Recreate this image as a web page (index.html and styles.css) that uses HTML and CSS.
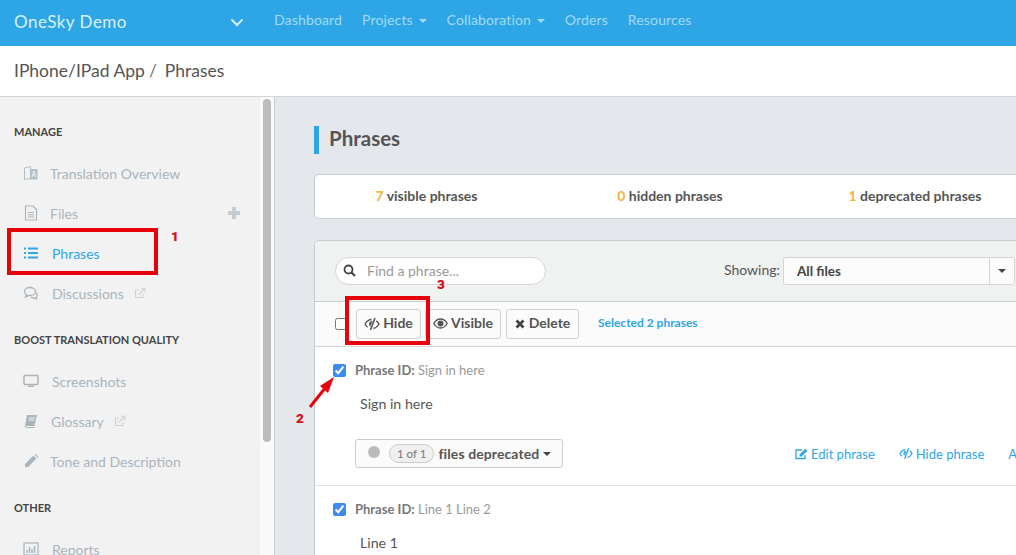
FILE: index.html
```html
<!DOCTYPE html>
<html lang="en">
<head>
<meta charset="utf-8">
<title>Phrases</title>
<link rel="stylesheet" href="styles.css">
</head>
<body>
<header class="topbar">
  <div class="brand"><span>OneSky Demo</span>
    <svg class="chev" width="14" height="9" viewBox="0 0 14 9"><path d="M1.500 1.500 7 7l5.500-5.500" fill="none" stroke="#d8f0fc" stroke-width="2"/></svg>
  </div>
  <nav class="topnav">
    <a>Dashboard</a>
    <a>Projects <i class="caret"></i></a>
    <a>Collaboration <i class="caret"></i></a>
    <a>Orders</a>
    <a>Resources</a>
  </nav>
</header>
<div class="crumbs"><span>IPhone/IPad App</span><span class="sep">/</span><span>Phrases</span></div>
<div class="body">
  <aside class="sidebar">
    <h4>MANAGE</h4>
    <a class="item"><svg class="ic" viewBox="0 0 16 16"><path d="M1.500 3l6-1.500v12l-6 1z" fill="none" stroke="#b4c0c8"/><path d="M7 4h7.500v10.500H7z" fill="#b4c0c8"/><path d="M9 12l1.800-6 1.800 6M9.800 10h2" fill="none" stroke="#f2f2f3"/></svg><span class="t1">Translation Overview</span></a>
    <a class="item"><svg class="ic" viewBox="0 0 16 16"><path d="M2.500 1h7.500l3.500 3.500V15h-11z" fill="none" stroke="#a9b5bd" stroke-width="1.200"/><path d="M5 7.500h6M5 9.800h6M5 12h6" stroke="#a9b5bd" stroke-width="1"/></svg><span class="t1">Files</span><span class="plus"></span></a>
    <a class="item active"><svg class="ic" viewBox="0 0 16 16"><path d="M5 3.500h10M5 8h10M5 12.500h10" stroke="#2ea6e6" stroke-width="2"/><path d="M1 2.500h2v2H1zM1 7h2v2H1zM1 11.500h2v2H1z" fill="#2ea6e6"/></svg><span class="t2">Phrases</span></a>
    <a class="item"><svg class="ic" viewBox="0 0 16 16"><ellipse cx="7" cy="6.500" rx="5.500" ry="4" fill="none" stroke="#a9b5bd" stroke-width="1.300"/><path d="M3.500 10l-1 2 3-1M13 8c2 1.500 1 4 0 4.500l.5 1.500-3-1c-1 0-2-.5-2.500-1" fill="none" stroke="#a9b5bd" stroke-width="1.300"/></svg><span class="t2">Discussions</span><svg class="ext" viewBox="0 0 12 12"><path d="M9 7v3.500H1.500V3H5" fill="none" stroke="#ccd3d8" stroke-width="1.100"/><path d="M4.500 7.500 10 2M7 1.200h4v4" fill="none" stroke="#ccd3d8" stroke-width="1.100"/></svg></a>
    <h4>BOOST TRANSLATION QUALITY</h4>
    <a class="item"><svg class="ic" viewBox="0 0 16 16"><rect x="1" y="2.500" width="14" height="9" rx="1" fill="none" stroke="#a9b5bd" stroke-width="1.500"/><path d="M5 14h6v-1.500H5z" fill="#a9b5bd"/></svg><span class="t3">Screenshots</span></a>
    <a class="item"><svg class="ic" viewBox="0 0 16 16"><path d="M4 2h10l-2.500 11H2z" fill="#a9b5bd"/><path d="M2 13c0 1 .5 1.500 1.500 1.500h8" fill="none" stroke="#a9b5bd"/><path d="M6 5h6M5.500 7h6" stroke="#f2f2f3"/></svg><span class="t4">Glossary</span><svg class="ext" viewBox="0 0 12 12"><path d="M9 7v3.500H1.500V3H5" fill="none" stroke="#ccd3d8" stroke-width="1.100"/><path d="M4.500 7.500 10 2M7 1.200h4v4" fill="none" stroke="#ccd3d8" stroke-width="1.100"/></svg></a>
    <a class="item"><svg class="ic" viewBox="0 0 16 16"><path d="M2 11 10.500 2.500l3 3L5 14H2zM11.500 1.500l1-.5 3 3-.5 1z" fill="#a9b5bd"/></svg><span class="t1">Tone and Description</span></a>
    <h4>OTHER</h4>
    <a class="item"><svg class="ic" viewBox="0 0 16 16"><rect x="1" y="2" width="14" height="12" fill="none" stroke="#a9b5bd" stroke-width="1.200"/><path d="M4 12V9M6.500 12V6M9 12V8M11.500 12V5" stroke="#a9b5bd" stroke-width="1.500"/></svg><span class="t3">Reports</span></a>
  </aside>
  <div class="track"><div class="thumb"></div></div>
  <main class="main">
    <h1 class="title">Phrases</h1>
    <section class="stats">
      <div><b>7</b> visible phrases</div>
      <div><b>0</b> hidden phrases</div>
      <div><b>1</b> deprecated phrases</div>
    </section>
    <section class="panel">
      <div class="filters">
        <div class="search"><svg width="13" height="13" viewBox="0 0 13 13"><circle cx="5.500" cy="5.500" r="4" fill="none" stroke="#444" stroke-width="1.800"/><path d="m8.500 8.500 3.500 3.500" stroke="#444" stroke-width="2.200"/></svg><span>Find a phrase...</span></div>
        <span class="showing">Showing:</span>
        <div class="select"><span class="val">All files</span><span class="drop"><i class="caret dark"></i></span></div>
      </div>
      <div class="toolbar">
        <input type="checkbox" class="cb">
        <button class="btn b-hide"><svg width="16" height="12" viewBox="0 0 16 12"><path d="M1 6c2-3 4-4.500 6.500-4.500M9.500 10.500C12 10 13.500 8.500 15 6c-.8-1.300-1.700-2.300-2.700-3.100M3.500 9.200C2.500 8.500 1.700 7.300 1 6" fill="none" stroke="#555" stroke-width="1.400"/><path d="M5 6a3 3 0 0 1 3.500-3L6.300 8.500A3 3 0 0 1 5 6z" fill="#555"/><path d="M11 0 6.500 12" stroke="#555" stroke-width="1.600"/></svg>Hide</button>
        <button class="btn b-visible"><svg width="15" height="11" viewBox="0 0 15 11"><path d="M.8 5.500C2.500 2.500 5 1 7.500 1s5 1.500 6.700 4.500C12.500 8.500 10 10 7.500 10S2.500 8.500.8 5.500z" fill="none" stroke="#555" stroke-width="1.300"/><circle cx="7.500" cy="5.500" r="3" fill="#555"/></svg>Visible</button>
        <button class="btn b-delete"><svg width="10" height="10" viewBox="0 0 10 10"><path d="M1.500 1.500l7 7M8.500 1.500l-7 7" stroke="#444" stroke-width="2.800"/></svg>Delete</button>
        <span class="selected">Selected 2 phrases</span>
      </div>
      <article class="row">
        <div class="pid"><input type="checkbox" class="cb2" checked><span><b>Phrase ID:</b> Sign in here</span></div>
        <p class="phrase">Sign in here</p>
        <div class="actions">
          <div class="dep"><i class="dot"></i><span class="pill">1 of 1</span><span class="deptext">files deprecated</span><i class="caret dark"></i></div>
          <div class="links">
            <a><svg width="13" height="12" viewBox="0 0 13 12"><path d="M10 7v3.500H1V2h6" fill="none" stroke="#2ea6e6" stroke-width="1.300"/><path d="M4.500 8.500V6.500L10.500 .8l2 2-6 5.700z" fill="#2ea6e6"/></svg>Edit phrase</a>
            <a><svg width="14" height="11" viewBox="0 0 16 12"><path d="M1 6c2-3 4-4.500 6.500-4.500M9.500 10.500C12 10 13.500 8.500 15 6c-.8-1.300-1.700-2.300-2.700-3.100M3.500 9.200C2.500 8.500 1.700 7.300 1 6" fill="none" stroke="#2ea6e6" stroke-width="1.400"/><path d="M5 6a3 3 0 0 1 3.500-3L6.300 8.500A3 3 0 0 1 5 6z" fill="#2ea6e6"/><path d="M11 0 6.500 12" stroke="#2ea6e6" stroke-width="1.600"/></svg>Hide phrase</a>
            <a>Add</a>
          </div>
        </div>
      </article>
      <article class="row">
        <div class="pid"><input type="checkbox" class="cb2" checked><span><b>Phrase ID:</b> Line 1 Line 2</span></div>
        <p class="phrase">Line 1</p>
      </article>
    </section>
  </main>
</div>
<div class="mark m-phrases"></div>
<div class="mark m-hide"></div>
<span class="num n1">1</span>
<span class="num n2">2</span>
<span class="num n3">3</span>
<svg class="arrow" width="30" height="34" viewBox="0 0 30 34"><path d="M2 32 18 12" stroke="#e8000b" stroke-width="3"/><path d="M26 2 12 11l8 7z" fill="#e8000b"/></svg>
</body>
</html>
```
FILE: styles.css
```css
* { box-sizing: border-box; }
html, body { margin: 0; height: 555px; overflow: hidden; }
body { font-family: Lato, "Open Sans", sans-serif; font-size: 14px; color: #555; background: #fff; position: relative; }
a { display: block; }
h1, h4, p { margin: 0; }

.topbar { height: 46px; background: #2ea6e6; display: flex; align-items: center; }
.brand { width: 274px; padding: 0 30px 4px 14px; display: flex; justify-content: space-between; align-items: center; color: #d8f0fc; font-size: 17px; letter-spacing: .5px; flex: none; }
.chev { margin-top: 2px; }
.topnav { display: flex; gap: 20px; color: #a3daf6; font-size: 14px; letter-spacing: .15px; margin-top: -7px; }
.topnav a { white-space: nowrap; }
.caret { display: inline-block; width: 0; height: 0; border: 4px solid transparent; border-top-color: #a3daf6; border-bottom: 0; margin-left: 2px; vertical-align: 2px; }
.caret.dark { border-top-color: #444; }

.crumbs { height: 51px; border-bottom: 1px solid #d3d5d8; padding: 0 0 2px 14px; display: flex; align-items: center; font-size: 17.500px; color: #555; }
.sep { margin: 0 8px 0 4px; color: #777; }

.body { display: flex; height: 459px; overflow: hidden; }
.sidebar { width: 260px; flex: none; background: #f2f2f3; padding: 9px 0 0 14px; overflow: hidden; }
.sidebar h4 { height: 48px; padding-top: 4px; line-height: 44px; font-size: 11px; font-weight: 700; color: #444; white-space: nowrap; }
.item { height: 40px; display: flex; align-items: center; padding: 0 0 2px 9px; color: #a9b5bd; font-size: 14px; position: relative; }
.item.active { color: #2ea6e6; }
.ic { width: 16px; height: 16px; flex: none; }
.t1 { margin-left: 11px; }
.t2 { margin-left: 13px; }
.t3 { margin-left: 13px; }
.t4 { margin-left: 12px; }
.ext { width: 12px; height: 12px; margin-left: 10px; }
.plus { margin-left: auto; margin-right: 20px; width: 12px; height: 12px; background: linear-gradient(#c3ccd2, #c3ccd2) center / 12px 4px no-repeat, linear-gradient(#c3ccd2, #c3ccd2) center / 4px 12px no-repeat; }

.track { width: 15px; flex: none; background: #f9f9f9; padding: 2px 3px 0; border-right: 1px solid #c9ccd0; }
.thumb { width: 8px; height: 343px; background: #bcbcbc; border-radius: 4px; }

.main { flex: 1; background: #e4e7ec; padding: 29px 0 0 39px; overflow: hidden; min-width: 0; }
.title { width: 800px; height: 28px; line-height: 24px; border-left: 5px solid #2ea6e6; padding-left: 10px; font-size: 20.500px; font-weight: 700; color: #555; }

.stats { width: 800px; height: 45px; margin-top: 20px; background: #fff; border: 1px solid #c6cbd0; border-radius: 5px; display: grid; grid-template-columns: 223px 264px 226px; align-items: center; text-align: center; font-size: 14px; color: #555; font-weight: 700; padding-bottom: 3px; }
.stats b { color: #f3b84a; }

.panel { width: 800px; margin-top: 21px; height: 400px; background: #fff; border: 1px solid #c6cbd0; border-radius: 5px 0 0 0; }
.filters { height: 61px; background: #f0f1f1; border-bottom: 1px solid #c6cbd0; display: flex; align-items: center; padding: 0 0 1px 20px; border-radius: 5px 0 0 0; }
.search { width: 211px; height: 28px; background: #fff; border: 1px solid #d3d5d8; border-radius: 14px; display: flex; align-items: center; gap: 11px; padding-left: 7px; color: #999; font-size: 14px; }
.showing { margin-left: 178px; width: 59px; font-size: 14px; color: #555; white-space: nowrap; margin-top: -2px; }
.select { width: 232px; height: 28px; background: #fcfcfc; border: 1px solid #d3d5d8; border-radius: 3px; display: flex; align-items: center; font-size: 13.500px; font-weight: 700; color: #444; }
.val { flex: 1; padding-left: 13px; }
.drop { width: 25px; height: 100%; border-left: 1px solid #d3d5d8; display: flex; align-items: center; justify-content: center; }
.drop .caret { margin: 0; }

.toolbar { height: 45px; background: #fbfbfb; border-bottom: 1px solid #d3d5d8; display: flex; align-items: center; padding: 0 0 0 20px; }
.cb { width: 12px; height: 12px; margin: 0 9px 0 0; accent-color: #3b8bf0; }
.btn { height: 30px; padding: 0 0 3px; background: #fbfbfb; border: 1px solid #cfd2d4; border-radius: 3px; font: 700 14px Lato, sans-serif; color: #555; display: flex; align-items: center; justify-content: center; gap: 3px; flex: none; }
.btn svg { margin-top: 2px; }
.b-hide { width: 65px; margin-right: 4px; }
.b-visible { width: 76px; margin-right: 5px; }
.b-delete { width: 73px; gap: 4px; }
.selected { margin: 0 0 3px 19px; font-size: 12px; font-weight: 700; color: #2ea6e6; }

.row { height: 139px; border-bottom: 1px solid #e3e4e6; padding: 13px 0 0 18px; }
.pid { display: flex; align-items: center; height: 20px; color: #999; font-size: 13px; }
.pid b { color: #777; }
.cb2 { width: 13px; height: 13px; margin: 0 9px 0 0; accent-color: #3b8bf0; }
.phrase { margin: 14px 0 0 27px; font-size: 14.200px; color: #555; line-height: 20px; }
.actions { display: flex; align-items: center; margin-top: 25px; padding-left: 22px; }
.dep { width: 208px; height: 29px; background: #fbfbfb; border: 1px solid #c9ccd0; border-radius: 3px; display: flex; align-items: center; padding-left: 12px; font-size: 14px; font-weight: 700; color: #555; }
.deptext { letter-spacing: .1px; }
.dot { width: 12px; height: 12px; background: #bbb; border-radius: 50%; margin-right: 9px; margin-top: -4px; }
.pill { height: 19px; line-height: 17px; padding: 0 7px; background: #f0f0f0; border: 1px solid #c9ccd0; border-radius: 10px; font-size: 11.500px; font-weight: 400; color: #777; margin-right: 4px; }
.dep .caret { margin-left: 4px; }
.links { display: flex; margin-left: 232px; gap: 24px; color: #2ea6e6; font-size: 13px; white-space: nowrap; }
.links a { display: flex; align-items: center; gap: 3px; }

.mark { position: absolute; border: 4px solid #e8000b; }
.m-phrases { left: 7px; top: 228px; width: 151px; height: 47px; }
.m-hide { left: 345px; top: 296px; width: 85px; height: 49px; }
.num { position: absolute; color: #d60b14; font: 900 13.500px Roboto, sans-serif; }
.n1 { left: 171px; top: 228px; }
.n2 { left: 296px; top: 410px; }
.n3 { left: 437px; top: 276px; }
.arrow { position: absolute; left: 308px; top: 375px; }
```
